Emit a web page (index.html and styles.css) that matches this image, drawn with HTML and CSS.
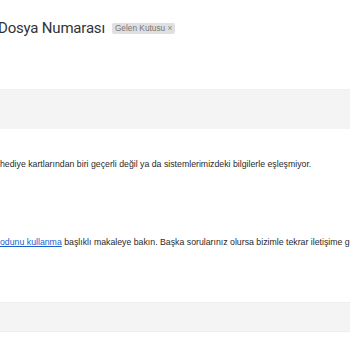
FILE: index.html
```html
<!DOCTYPE html>
<html lang="tr">
<head>
<meta charset="utf-8">
<link rel="stylesheet" href="styles.css">
</head>
<body>
<div class="page">
  <div class="header">
    <h1 class="subject">Dosya Numarası</h1>
    <span class="chip">Gelen Kutusu <span class="chip-x">×</span></span>
  </div>
  <div class="band band-top"></div>
  <p class="msg msg-1">hediye kartlarından biri geçerli değil ya da sistemlerimizdeki bilgilerle eşleşmiyor.</p>
  <p class="msg msg-2"><a class="link" href="#">odunu kullanma</a> başlıklı makaleye bakın. Başka sorularınız olursa bizimle tekrar iletişime geçin.</p>
  <div class="band band-bottom"></div>
</div>
</body>
</html>
```
FILE: styles.css
```css
html, body {
  margin: 0;
  padding: 0;
  background: #ffffff;
  overflow: hidden;
}
.page {
  width: 350px;
  height: 350px;
  overflow: hidden;
  display: flex;
  flex-direction: column;
}
.header {
  display: flex;
  align-items: center;
  gap: 7px;
  margin: 18px 0 0 -2px;
  height: 20px;
}
.subject {
  margin: 0;
  font-family: Roboto, "Noto Sans", sans-serif;
  font-weight: 400;
  font-size: 15px;
  letter-spacing: -0.2px;
  color: #333333;
  white-space: nowrap;
}
.chip {
  font-family: "Liberation Sans", Arial, sans-serif;
  font-size: 8.3px;
  line-height: 11px;
  color: #777777;
  background: #e0e0e0;
  padding: 0 3px;
  border-radius: 2px;
  white-space: nowrap;
}
.chip-x {
  color: #888888;
}
.band {
  background: #f4f4f4;
  flex: none;
}
.band-top {
  margin-top: 51px;
  height: 39px;
  border-top: 1px solid #f0f0f0;
}
.msg {
  margin: 0;
  font-family: "Liberation Sans", Arial, sans-serif;
  font-size: 8.75px;
  color: #2a2a2a;
  white-space: nowrap;
}
.msg-1 {
  margin-top: 30px;
}
.msg-2 {
  margin-top: 68px;
}
.link {
  color: #1a5fd0;
  text-decoration: underline;
}
.band-bottom {
  margin-top: 55px;
  height: 28px;
  border-top: 1px solid #eeeeee;
  border-bottom: 1px solid #eeeeee;
}
```
